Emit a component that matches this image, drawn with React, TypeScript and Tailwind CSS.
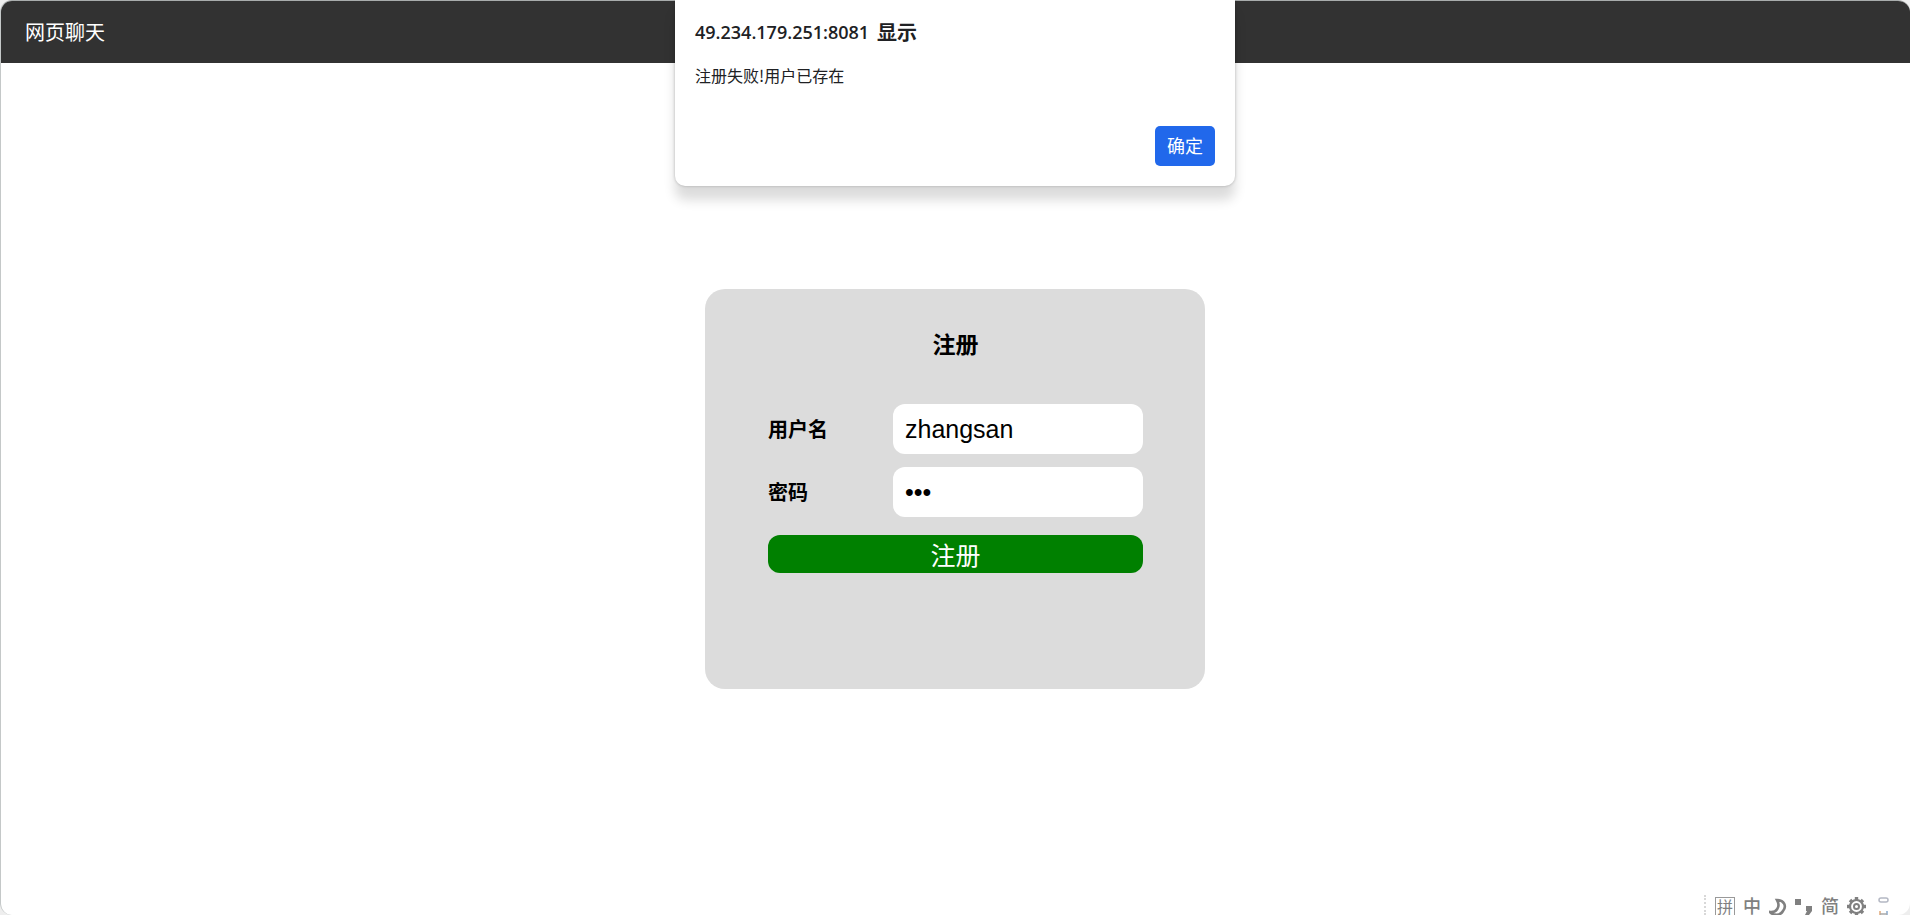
import { useState } from 'react';
import type { FormEvent } from 'react';

interface FieldProps {
  id: string;
  label: string;
  type: 'text' | 'password';
  value: string;
  onChange: (value: string) => void;
}

function Field({ id, label, type, value, onChange }: FieldProps) {
  return (
    <div className="flex h-[50px] items-center">
      <label htmlFor={id} className="w-1/3 text-[20px] font-bold">
        {label}
      </label>
      <input
        id={id}
        type={type}
        value={value}
        autoComplete="off"
        onChange={e => onChange(e.target.value)}
        className="h-full w-2/3 rounded-xl bg-white px-3 font-['Liberation_Sans','Noto_Sans_CJK_SC',sans-serif] text-[25px] outline-none"
      />
    </div>
  );
}

interface AlertProps {
  host: string;
  message: string;
  onClose: () => void;
}

function AlertBox({ host, message, onClose }: AlertProps) {
  return (
    <div
      role="alertdialog"
      aria-labelledby="alert-title"
      className="absolute top-0 left-1/2 w-[560px] -translate-x-1/2 rounded-b-[10px] bg-white px-5 pt-4 pb-5 text-[#202124] shadow-[0_0_3px_rgba(0,0,0,0.25),0_14px_12px_rgba(0,0,0,0.14)]"
    >
      <h2 id="alert-title" className="flex items-center gap-2 text-[20px] leading-8 font-bold">
        <span className="font-['Open_Sans',sans-serif] text-[18px] font-semibold">{host}</span>
        <span>显示</span>
      </h2>
      <p className="mt-[15px] text-[16px] leading-6">{message}</p>
      <div className="mt-[39px] flex justify-end">
        <button
          onClick={onClose}
          className="h-10 w-[60px] rounded-[5px] bg-[#2168eb] pb-[2px] text-[18px] text-white"
        >
          确定
        </button>
      </div>
    </div>
  );
}

// Input method bar, resting on the bottom edge of the window
function ImeBar() {
  return (
    <div className="absolute right-5 bottom-0 flex h-5 items-start gap-2 text-[18px] leading-5 font-medium text-[#808080]">
      <div className="mr-px h-5 border-l-2 border-dotted border-[#d8d8d8]" />
      <span className="mt-[2px] h-[18px] w-5 border border-b-0 border-[#999] text-center text-[16px] leading-[17px] font-normal">
        拼
      </span>
      <span>中</span>
      <svg width="18" height="20" viewBox="0 0 18 20" fill="none" stroke="#808080" strokeWidth="2.6">
        <path d="M8 5c7 0 10 6 6 11-3 5-9 5-13 1 6 1 11-5 7-12Z" />
      </svg>
      <svg width="18" height="20" viewBox="0 0 18 20" fill="#808080">
        <path d="M0 4h6v6H0z" />
        <path d="M11 11h6v5l-3 4h-4l2-4h-1z" />
      </svg>
      <span>简</span>
      <svg width="19" height="20" viewBox="0 0 19 20" fill="none" stroke="#808080">
        <circle cx="9.5" cy="11.5" r="6.5" strokeWidth="2.2" />
        <circle cx="9.5" cy="11.5" r="2.5" strokeWidth="2" />
        <path
          strokeWidth="3.4"
          d="M9.5 2v3M9.5 18v2M0 11.5h3M16 11.5h3M3 5l2 2M16 5l-2 2M3 18l2-2M16 18l-2-2"
        />
      </svg>
      <svg className="ml-1" width="12" height="20" viewBox="0 0 12 20" fill="none" strokeWidth="1.5">
        <rect x="1" y="3" width="9" height="4" rx="2" stroke="#b4b8c4" />
        <path d="M2 16v4" stroke="#e0a878" />
        <path d="M9 16v4" stroke="#88a8cc" />
        <path d="M2 19h7" stroke="#a8a8a8" />
      </svg>
    </div>
  );
}

export default function App() {
  const [username, setUsername] = useState('zhangsan');
  const [password, setPassword] = useState('123');
  const [message, setMessage] = useState('注册失败!用户已存在');

  const handleSubmit = (e: FormEvent) => {
    e.preventDefault();
    setMessage('注册失败!用户已存在');
  };

  return (
    <div className="relative min-h-screen bg-[#eeeeee] font-['Noto_Sans_CJK_SC',sans-serif] text-black">
      <div className="flex min-h-screen flex-col overflow-hidden rounded-xl border-t border-l border-t-[#a8acac] border-l-[#c4c8c8] bg-white">
        <header className="flex h-[62px] items-center bg-[#323232] px-6 text-[20px] text-white">
          网页聊天
        </header>

        <main className="flex flex-1 items-center justify-center pr-px">
          <form
            onSubmit={handleSubmit}
            className="h-[400px] w-[500px] rounded-[20px] bg-[#dcdcdc] pt-10 pr-[62px] pl-[63px]"
          >
            <h3 className="text-center text-[23px] leading-7 font-bold">注册</h3>
            <div className="mt-[47px] flex flex-col gap-[13px]">
              <Field id="username" label="用户名" type="text" value={username} onChange={setUsername} />
              <Field id="password" label="密码" type="password" value={password} onChange={setPassword} />
            </div>
            <button
              type="submit"
              className="mt-[18px] h-[38px] w-full rounded-xl bg-[#008000] text-[25px] leading-[38px] text-white"
            >
              注册
            </button>
          </form>
        </main>
      </div>

      {message && (
        <AlertBox host="49.234.179.251:8081" message={message} onClose={() => setMessage('')} />
      )}
      <ImeBar />
    </div>
  );
}
